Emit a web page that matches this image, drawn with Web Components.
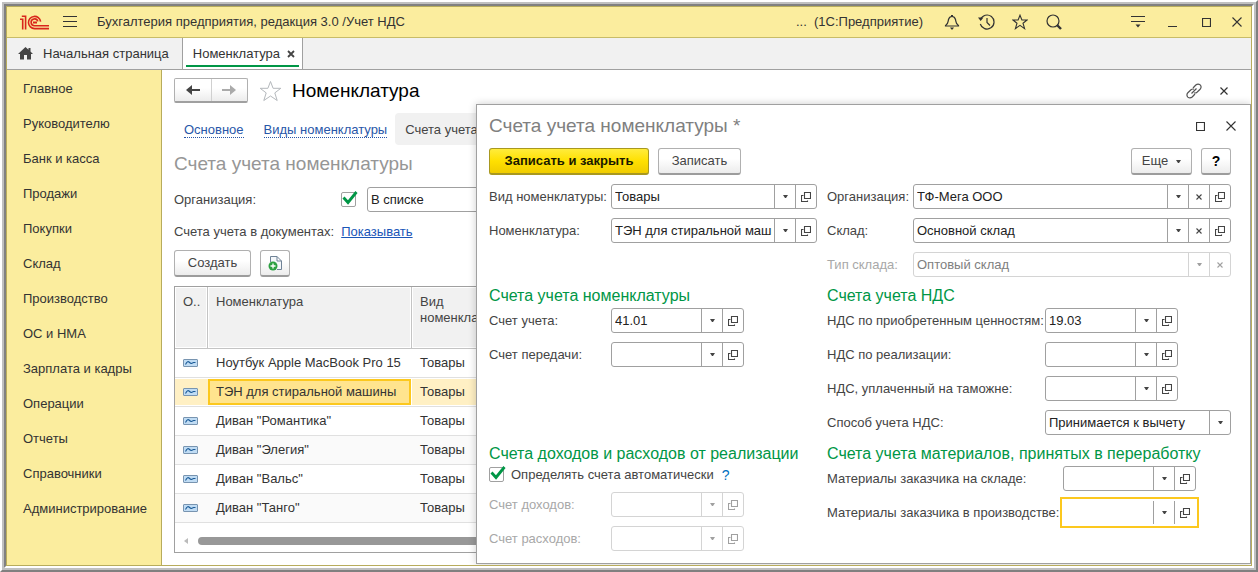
<!DOCTYPE html>
<html lang="ru">
<head>
<meta charset="utf-8">
<title>Бухгалтерия предприятия</title>
<style>
  html, body { margin: 0; height: 100%; }
  body { font: 13px/16px "Liberation Sans", Arial, sans-serif; color: #333; background: #fff; }
</style>
</head>
<body>
<app-window>
  <title-bar slot="title"></title-bar>
  <tab-strip slot="tabs"></tab-strip>
  <section-menu slot="menu"></section-menu>
  <item-list slot="page"></item-list>
  <account-dialog slot="dialog"></account-dialog>
</app-window>

<script>
const define = (name, html, setup) => {
  const tpl = document.createElement('template');
  tpl.innerHTML = html;
  customElements.define(name, class extends HTMLElement {
    connectedCallback() {
      if (this.shadowRoot) return;
      this.attachShadow({ mode: 'open' }).append(tpl.content.cloneNode(true));
      if (setup) setup(this, this.shadowRoot);
    }
  });
};

/* ---------- icons ---------- */
const ICONS = {
  logo: [30, 15, '<g fill="none" stroke="#d9261c" stroke-width="1.6"><path d="M0 4.2H2.7V14.5M1.8 1.2H5.6V14.5"/><path d="M20.6 6.6A6.1 6.1 0 1 0 14.6 13.6H29"/><path d="M17.8 6.4A3.4 3.4 0 1 0 14.6 10.7H29"/></g><path d="M13 6.5h4v2h-4z" fill="#d9261c"/>'],
  menu: [14, 12, '<path d="M0 .5h14M0 5.5h14M0 10.5h14" stroke="#333"/>'],
  bell: [16, 16, '<path d="M1.5 11.5C4.5 10 4 7.500 4.500 5.500C5 3.500 6.500 2.500 8 2.500S11 3.500 11.500 5.500C12 7.500 11.500 10 14.500 11.500V12H1.500Z" fill="none" stroke="#333" stroke-width="1.200"/><path d="M7 1h2v2H7zM6 13.500h4L8.600 15.500H7.400z" fill="#333"/>'],
  history: [17, 16, '<path d="M2.500 5.500A7 7 0 1 1 2.300 10" fill="none" stroke="#333" stroke-width="1.200"/><path d="M9 4v4.500l3 3" fill="none" stroke="#333" stroke-width="1.200"/><path d="M0 3.500h5.500L2.600 7z" fill="#333"/>'],
  star: [16, 16, '<path d="M8 1.200L9.900 6H15L11 9.200L12.600 14.600L8 11.400L3.400 14.600L5 9.200L1 6H6.100Z" fill="none" stroke="#333" stroke-width="1.100"/>'],
  search: [16, 16, '<circle cx="7" cy="7" r="6" fill="none" stroke="#333" stroke-width="1.200"/><path d="M11 11l4 4" stroke="#333" stroke-width="2.400"/>'],
  filter: [14, 12, '<path d="M0 .5h14M0 5.500h14" stroke="#333"/><path d="M4.500 8.500h5L7 11.500z" fill="#333"/>'],
  min: [9, 9, '<path d="M0 8.500h9" stroke="#333"/>'],
  max: [9, 9, '<path d="M.5 .5h8v8h-8z" fill="none" stroke="#333" stroke-width="1.200"/>'],
  close: [10, 10, '<path d="M.5 .5l9 9M9.500 .5l-9 9" stroke="#333" stroke-width="1.100"/>'],
  smallclose: [8, 8, '<path d="M.5 .5l7 7M7.500 .5l-7 7" stroke="#333" stroke-width="1.200"/>'],
  tabclose: [8, 8, '<path d="M1 1l6 6M7 1l-6 6" stroke="#444" stroke-width="1.800"/>'],
  home: [15, 13, '<path d="M7.500 0L0 7h2v5.500h4V8h3v4.500h4V7h2L12.500 4.600V1h-2v1.800z" fill="#444"/>'],
  left: [14, 10, '<path d="M6 0v10L0 5z" fill="#444"/><path d="M3 5H14" stroke="#444" stroke-width="2"/>'],
  right: [14, 10, '<path d="M8 0v10L14 5z" fill="#aaa"/><path d="M11 5H0" stroke="#aaa" stroke-width="2"/>'],
  bigstar: [23, 22, '<path d="M11.500 1.500L14.100 8.300H21.800L15.800 12.900L18.200 20.500L11.500 16L4.800 20.500L7.200 12.900L1.200 8.300H8.900Z" fill="none" stroke="#b4b8bc"/>'],
  link: [16, 16, '<g fill="none" stroke="#555" stroke-width="1.200"><path d="M7 5L9.800 2Q12 .2 14.200 1.900Q16 4 14.100 6.300L11 9.300Q9.600 10.400 8 9.800"/><path d="M9 11L6.200 14Q4 15.800 1.800 14.100Q0 12 1.900 9.700L5 6.700Q6.400 5.600 8 6.200"/><path d="M5.500 10.500L10.500 5.500"/></g>'],
  caret: [5, 3, '<path d="M0 0h5L3 3H2z" fill="currentColor"/>'],
  clear: [6, 6, '<path d="M.5 .5l5 5M5.500 .5l-5 5" stroke="currentColor" stroke-width="1.100"/>'],
  open: [10, 10, '<path d="M3.500 .5h6v6h-6zM2.500 3.500h-2v6h6v-1" fill="none" stroke="currentColor" stroke-width="1.100"/>'],
  tick: [16, 14, '<path d="M1.500 6.500L6 11.500L14.500 1" fill="none" stroke="#009646" stroke-width="2.800"/>'],
  adddoc: [15, 16, '<path d="M2.500 7V1.500H9L13.500 6V14.500H9M9 1.500V6H13.500" fill="#f4f7fa" stroke="#6f8296"/><circle cx="5" cy="11" r="4.500" fill="#2ca042"/><path d="M5 8.500v5M2.500 11h5" stroke="#fff" stroke-width="1.300"/>'],
  row: [15, 8, '<rect x=".5" y=".5" width="14" height="7" rx=".5" fill="#c0dcf4" stroke="#7894b0"/><path d="M2.500 5.500Q4.500 1.500 6 3T8.500 4.500L10.500 3.500H12.500" fill="none" stroke="#1c5c98" stroke-width="1.100"/>'],
  scroll: [4, 6, '<path d="M4 0v6L0 3z" fill="#bbb"/>']
};
define('ui-icon', '<style>:host{display:block;flex:none}svg{display:block}</style><svg aria-hidden="true"></svg>', (el, root) => {
  const [w, h, body] = ICONS[el.getAttribute('name')];
  const svg = root.querySelector('svg');
  svg.setAttribute('width', w);
  svg.setAttribute('height', h);
  svg.setAttribute('viewBox', `0 0 ${w} ${h}`);
  svg.innerHTML = body;
});

/* ---------- window frame ---------- */
define('app-window', `
<style>
  :host { min-height: 100vh; box-sizing: border-box; display: flex; border: 2px solid; border-color: #fff #808080 #808080 #fff; }
  .mid, .inner { flex: 1; display: flex; min-width: 0; }
  .mid { border: 2px solid #c0c0c0; }
  .inner { border: 2px solid; border-color: #808080 #fff #fff #808080; }
  .app { flex: 1; min-width: 0; display: flex; flex-direction: column; border: 1px solid #b8ac5c; }
  .body { flex: 1; display: flex; min-height: 0; }
  main { position: relative; flex: 1; min-width: 0; overflow: hidden; display: flex; background: #fff; }
  ::slotted([slot=page]) { flex: 1; min-width: 0; }
</style>
<div class="mid"><div class="inner"><div class="app">
  <slot name="title"></slot>
  <slot name="tabs"></slot>
  <div class="body">
    <slot name="menu"></slot>
    <main><slot name="page"></slot><slot name="dialog"></slot></main>
  </div>
</div></div></div>`);

define('title-bar', `
<style>
  :host { display: flex; align-items: center; height: 30px; padding: 0 0 0 13px; background: #fbed9e; border-bottom: 1px solid #c8bc68; }
  .logo { margin-right: 13px; }
  h1 { margin: 0 0 0 20px; font: inherit; flex: 1; white-space: nowrap; }
  button { all: unset; display: flex; justify-content: center; align-items: center; width: 34px; height: 24px; }
  .menu { width: 14px; }
  .tools { display: flex; margin: 0 50px 0 12px; }
  .right { display: flex; }
  .right button:last-child { width: 28px; }
  .host { white-space: pre; }
</style>
<ui-icon class="logo" name="logo"></ui-icon>
<button class="menu" aria-label="Меню"><ui-icon name="menu"></ui-icon></button>
<h1>Бухгалтерия предприятия, редакция 3.0 /Учет НДС</h1>
<span class="host">...  (1С:Предприятие)</span>
<div class="tools">
  <button aria-label="Уведомления"><ui-icon name="bell"></ui-icon></button>
  <button aria-label="История"><ui-icon name="history"></ui-icon></button>
  <button aria-label="Избранное"><ui-icon name="star"></ui-icon></button>
  <button aria-label="Поиск"><ui-icon name="search"></ui-icon></button>
</div>
<div class="right">
  <button aria-label="Настройки"><ui-icon name="filter"></ui-icon></button>
  <button aria-label="Свернуть"><ui-icon name="min"></ui-icon></button>
  <button aria-label="Развернуть"><ui-icon name="max"></ui-icon></button>
  <button aria-label="Закрыть"><ui-icon name="close"></ui-icon></button>
</div>`);

define('tab-strip', `
<style>
  :host { display: flex; height: 31px; background: #f1f1f1; border-bottom: 1px solid #a0a0a0; }
  .tab { display: flex; align-items: center; border-right: 1px solid #a0a0a0; white-space: nowrap; color: #333; }
  .home { gap: 10px; padding: 0 13px 0 11px; text-decoration: none; }
  .current { position: relative; gap: 7px; padding: 0 7px 0 10px; background: #fff; }
  .current::after { content: ""; position: absolute; left: 3px; right: 3px; bottom: 2px; height: 2px; background: #009646; }
  button { all: unset; }
</style>
<a class="tab home" href="#home"><ui-icon name="home"></ui-icon><span>Начальная страница</span></a>
<div class="tab current"><span>Номенклатура</span><button aria-label="Закрыть вкладку"><ui-icon name="tabclose"></ui-icon></button></div>`);

define('section-menu', `
<style>
  :host { display: block; box-sizing: border-box; width: 155px; flex: none; padding-top: 1px; background: #fbed9e; border-right: 1px solid #b8ac5c; }
  a { display: flex; align-items: center; height: 35px; padding-left: 16px; color: #333; text-decoration: none; white-space: nowrap; }
</style><nav></nav>`, (el, root) => {
  const names = ['Главное', 'Руководителю', 'Банк и касса', 'Продажи', 'Покупки', 'Склад', 'Производство', 'ОС и НМА', 'Зарплата и кадры', 'Операции', 'Отчеты', 'Справочники', 'Администрирование'];
  root.querySelector('nav').innerHTML = names.map((n, i) => `<a href="#s${i}">${n}</a>`).join('');
});

/* ---------- controls ---------- */
define('push-button', `
<style>
  :host { display: block; flex: none; }
  button { box-sizing: border-box; width: 100%; height: 27px; padding: 0 13px; display: flex; align-items: center; justify-content: center; gap: 8px; font: inherit; color: #444; white-space: nowrap;
    border: 1px solid #b0b0b0; border-bottom: 2px solid #9c9c9c; border-radius: 3px; background: linear-gradient(#fff 40%, #ececec); }
  :host([primary]) button { font-weight: bold; color: #1a1a00; border-color: #a89820; background: linear-gradient(#ffec3c, #ffe000 50%, #f0cc00); }
  :host([square]) button { padding: 0; font-weight: bold; font-size: 14px; color: #000; }
</style><button><slot></slot></button>`, (el, root) => {
  if (el.title) root.querySelector('button').setAttribute('aria-label', el.title);
});

define('tick-box', `
<style>
  :host { display: block; flex: none; }
  label { display: flex; align-items: center; gap: 7px; white-space: nowrap; }
  .box { position: relative; width: 15px; height: 15px; }
  input { appearance: none; display: block; box-sizing: border-box; width: 15px; height: 15px; margin: 0; border: 1px solid #a0a0a0; border-radius: 2px; background: #fff; }
  ui-icon { position: absolute; left: 1px; top: -1px; }
</style>
<label><span class="box"><input type="checkbox" checked><ui-icon name="tick"></ui-icon></span><slot></slot></label>`, (el, root) => {
  if (el.hasAttribute('caption')) root.querySelector('input').setAttribute('aria-label', el.getAttribute('caption'));
});

define('form-field', `
<style>
  :host { display: flex; align-items: center; height: 25px; color: #444; }
  label { flex: none; width: var(--label, 122px); white-space: nowrap; }
  .box { flex: 1; min-width: 0; display: flex; box-sizing: border-box; height: 25px; border: 1px solid #a0a0a0; border-radius: 3px; background: #fff; }
  :host([short]) .box { flex: none; width: 133px; }
  input, select { appearance: none; flex: 1; min-width: 0; box-sizing: border-box; margin: 0; border: 0; padding: 0 2px 0 3px; background: none; font: inherit; color: #222; opacity: 1; outline: 0; }
  input { text-overflow: clip; }
  button, .drop { box-sizing: border-box; width: 21px; flex: none; margin: 0; padding: 0; display: flex; align-items: center; justify-content: center; border: 0; border-left: 1px solid #a0a0a0; background: none; color: #444; }
  :host([disabled]) { color: #a8a8a8; }
  :host([disabled]) .box, :host([disabled]) button { border-color: #d4d4d4; }
  :host([disabled]) input { color: #808080; }
  :host([disabled]) button { color: #a0a0a0; }
  :host([focused]) .box { border-color: transparent; outline: 2px solid #fcc81e; outline-offset: 1px; border-radius: 0; }
</style>
<label for="f"></label><div class="box"></div>`, (el, root) => {
  const get = n => el.getAttribute(n) || '';
  const label = root.querySelector('label');
  const box = root.querySelector('.box');
  const off = el.hasAttribute('disabled');
  label.textContent = get('label');
  if (!get('label')) label.remove();
  if (el.hasAttribute('choice')) {
    const select = document.createElement('select');
    select.id = 'f';
    select.add(new Option(get('value')));
    if (get('caption')) select.setAttribute('aria-label', get('caption'));
    box.append(select);
    box.insertAdjacentHTML('beforeend', '<span class="drop"><ui-icon name="caret"></ui-icon></span>');
  } else {
    const input = document.createElement('input');
    input.id = 'f';
    input.type = 'text';
    input.value = get('value');
    input.disabled = off;
    box.append(input);
    const titles = { caret: 'Выбрать', clear: 'Очистить', open: 'Открыть' };
    for (const name of (get('buttons') || 'caret open').split(' '))
      box.insertAdjacentHTML('beforeend', `<button aria-label="${titles[name]}"${off ? ' disabled' : ''}><ui-icon name="${name}"></ui-icon></button>`);
  }
});

/* ---------- list page ---------- */
define('item-list', `
<style>
  :host { display: flex; flex-direction: column; padding: 8px 20px 12px 12px; box-sizing: border-box; color: #444; }
  .head { display: flex; align-items: center; height: 25px; margin-right: -8px; }
  .nav { display: flex; box-sizing: border-box; width: 74px; height: 25px; border: 1px solid #b0b0b0; border-bottom: 2px solid #a0a0a0; border-radius: 2px; background: linear-gradient(#fff 40%, #ececec); }
  .nav button, .plain { all: unset; flex: 1; display: flex; align-items: center; justify-content: center; }
  .nav button + button { border-left: 1px solid #d0d0d0; }
  h2 { flex: 1; margin: 0 0 0 10px; font: 19px/24px "Liberation Sans", Arial, sans-serif; color: #000; }
  .star { margin-left: 11px; }
  .plain { flex: none; width: 30px; height: 24px; }
  .links { display: flex; align-items: center; height: 32px; margin-top: 10px; white-space: nowrap; }
  .links a { color: #2856a8; text-decoration: none; border-bottom: 1px dotted #2856a8; line-height: 14px; margin: 3px 0 0 10px; }
  .links a + a { margin-left: 20px; }
  .links span { margin-left: 8px; height: 32px; line-height: 34px; padding: 0 10px; border-radius: 4px; background: #f1f1f1; flex: 1; }
  h3 { margin: 7px 0 0; font: 19px/24px "Liberation Sans", Arial, sans-serif; color: #969696; }
  .filter { display: flex; align-items: center; height: 25px; margin-top: 11px; }
  .filter span { width: 167px; }
  .filter form-field { flex: 1; margin-left: 11px; }
  .docs { display: flex; height: 16px; margin-top: 12px; gap: 7px; white-space: nowrap; }
  .docs a { color: #1a56b8; }
  .bar { display: flex; gap: 9px; margin-top: 10px; }
  .bar push-button:first-child { width: 77px; }
  .bar push-button + push-button { width: 30px; }
  .grid { flex: 1; display: flex; flex-direction: column; margin-top: 9px; border: 1px solid #a0a0a0; background: #fff; }
  table { width: 100%; table-layout: fixed; border-collapse: separate; border-spacing: 0; color: #333; }
  th, td { box-sizing: border-box; padding: 0 8px; text-align: left; font-weight: normal; white-space: nowrap; overflow: hidden; }
  th { height: 62px; padding-top: 7px; vertical-align: top; white-space: normal; color: #444; background: #f1f1f1; border-right: 1px solid #c4c4c4; border-bottom: 1px solid #c4c4c4; box-shadow: inset 0 0 0 1px #fff; }
  td { height: 29px; border-bottom: 1px solid #e0e0e0; }
  tr:nth-child(even) td { background: #fafafa; }
  tr.sel td { background: #fff0c4; box-shadow: inset 0 1px #fff, inset 0 -1px #fff; }
  tr.sel td:nth-child(2) { background: #ffe48e; box-shadow: inset 0 1px #fff, inset 0 -1px #fff, inset -1px 0 #fff, inset 2px 0 #fcc81e, inset -3px 0 #fcc81e, inset 0 3px #fcc81e, inset 0 -3px #fcc81e; }
  .scroll { display: flex; align-items: center; gap: 10px; height: 29px; padding: 6px 9px 0; box-sizing: border-box; }
  .scroll i { flex: 1; height: 8px; border-radius: 4px; background: #989898; }
</style>
<div class="head">
  <div class="nav"><button aria-label="Назад"><ui-icon name="left"></ui-icon></button><button aria-label="Вперед"><ui-icon name="right"></ui-icon></button></div>
  <ui-icon class="star" name="bigstar"></ui-icon>
  <h2>Номенклатура</h2>
  <button class="plain" aria-label="Ссылка"><ui-icon name="link"></ui-icon></button>
  <button class="plain" aria-label="Закрыть"><ui-icon name="smallclose"></ui-icon></button>
</div>
<div class="links"><a href="#main">Основное</a><a href="#kinds">Виды номенклатуры</a><span>Счета учета</span></div>
<h3>Счета учета номенклатуры</h3>
<div class="filter"><span>Организация:</span><tick-box caption="Отбор по организации"></tick-box><form-field choice caption="Организация" value="В списке"></form-field></div>
<div class="docs"><span>Счета учета в документах:</span><a href="#show">Показывать</a></div>
<div class="bar"><push-button>Создать</push-button><push-button square title="Создать копированием"><ui-icon name="adddoc"></ui-icon></push-button></div>
<div class="grid">
  <table>
    <colgroup><col style="width:33px"><col style="width:204px"><col style="width:96px"><col></colgroup>
    <thead><tr><th>О..</th><th>Номенклатура</th><th>Вид<br>номенкла</th><th></th></tr></thead>
    <tbody></tbody>
  </table>
  <div class="scroll"><ui-icon name="scroll"></ui-icon><i></i></div>
</div>`, (el, root) => {
  const rows = ['Ноутбук Apple MacBook Pro 15', 'ТЭН для стиральной машины', 'Диван "Романтика"', 'Диван "Элегия"', 'Диван "Вальс"', 'Диван "Танго"'];
  root.querySelector('tbody').innerHTML = rows.map((r, i) =>
    `<tr${i === 1 ? ' class="sel"' : ''}><td><ui-icon name="row"></ui-icon></td><td>${r}</td><td>Товары</td><td></td></tr>`).join('');
});

/* ---------- dialog over the list ---------- */
define('account-dialog', `
<style>
  :host { position: absolute; left: 314px; right: 0; top: 34px; bottom: 1px; box-sizing: border-box; display: block; padding: 7px 19px 0 12px; border: 1px solid #a0a0a0; background: #fff; box-shadow: 0 0 8px #0003; color: #444; }
  header { display: flex; align-items: center; height: 28px; }
  h2 { flex: 1; margin: 0; font: 19px/24px "Liberation Sans", Arial, sans-serif; color: #808080; }
  header button { all: unset; width: 31px; height: 24px; display: flex; align-items: center; justify-content: center; }
  header button:last-child { width: 10px; padding: 0 0 0 10px; margin-right: -5px; }
  .bar { display: flex; gap: 9px; margin-top: 8px; }
  .save { width: 160px; } .write { width: 83px; }
  .more { width: 61px; margin-left: auto; } .help { width: 30px; }
  .cols { display: grid; grid-template-columns: 328px minmax(0, 1fr); column-gap: 10px; margin-top: 9px; }
  section { display: grid; grid-template-columns: minmax(0, 1fr); align-content: start; row-gap: 9px; }
  section.top { height: 101px; }
  section.mid { height: 158px; }
  h3 { margin: 0 0 -9px; padding-bottom: 1px; font: 16px/22px "Liberation Sans", Arial, sans-serif; color: #009646; white-space: nowrap; }
  .a { --label: 86px; } .b { --label: 218px; } .c { --label: 236px; }
  .auto { display: flex; align-items: center; gap: 8px; height: 17px; }
  .auto a { color: #0070c0; font-size: 14px; text-decoration: none; }
</style>
<header><h2>Счета учета номенклатуры *</h2><button aria-label="Развернуть"><ui-icon name="max"></ui-icon></button><button aria-label="Закрыть"><ui-icon name="close"></ui-icon></button></header>
<div class="bar">
  <push-button class="save" primary>Записать и закрыть</push-button>
  <push-button class="write">Записать</push-button>
  <push-button class="more">Еще<ui-icon name="caret"></ui-icon></push-button>
  <push-button class="help" square>?</push-button>
</div>
<div class="cols">
  <section class="top">
    <form-field label="Вид номенклатуры:" value="Товары"></form-field>
    <form-field label="Номенклатура:" value="ТЭН для стиральной машины"></form-field>
  </section>
  <section class="top a">
    <form-field label="Организация:" value="ТФ-Мега ООО" buttons="caret clear open"></form-field>
    <form-field label="Склад:" value="Основной склад" buttons="caret clear open"></form-field>
    <form-field label="Тип склада:" value="Оптовый склад" buttons="caret clear" disabled></form-field>
  </section>
  <section class="mid">
    <h3>Счета учета номенклатуры</h3>
    <form-field short label="Счет учета:" value="41.01"></form-field>
    <form-field short label="Счет передачи:"></form-field>
  </section>
  <section class="mid b">
    <h3>Счета учета НДС</h3>
    <form-field short label="НДС по приобретенным ценностям:" value="19.03"></form-field>
    <form-field short label="НДС по реализации:"></form-field>
    <form-field short label="НДС, уплаченный на таможне:"></form-field>
    <form-field choice label="Способ учета НДС:" value="Принимается к вычету"></form-field>
  </section>
  <section>
    <h3>Счета доходов и расходов от реализации</h3>
    <div class="auto"><tick-box>Определять счета автоматически</tick-box><a href="#help">?</a></div>
    <form-field short disabled label="Счет доходов:"></form-field>
    <form-field short disabled label="Счет расходов:"></form-field>
  </section>
  <section class="c">
    <h3>Счета учета материалов, принятых в переработку</h3>
    <form-field short label="Материалы заказчика на складе:"></form-field>
    <form-field short focused label="Материалы заказчика в производстве:"></form-field>
  </section>
</div>`);
</script>
</body>
</html>
